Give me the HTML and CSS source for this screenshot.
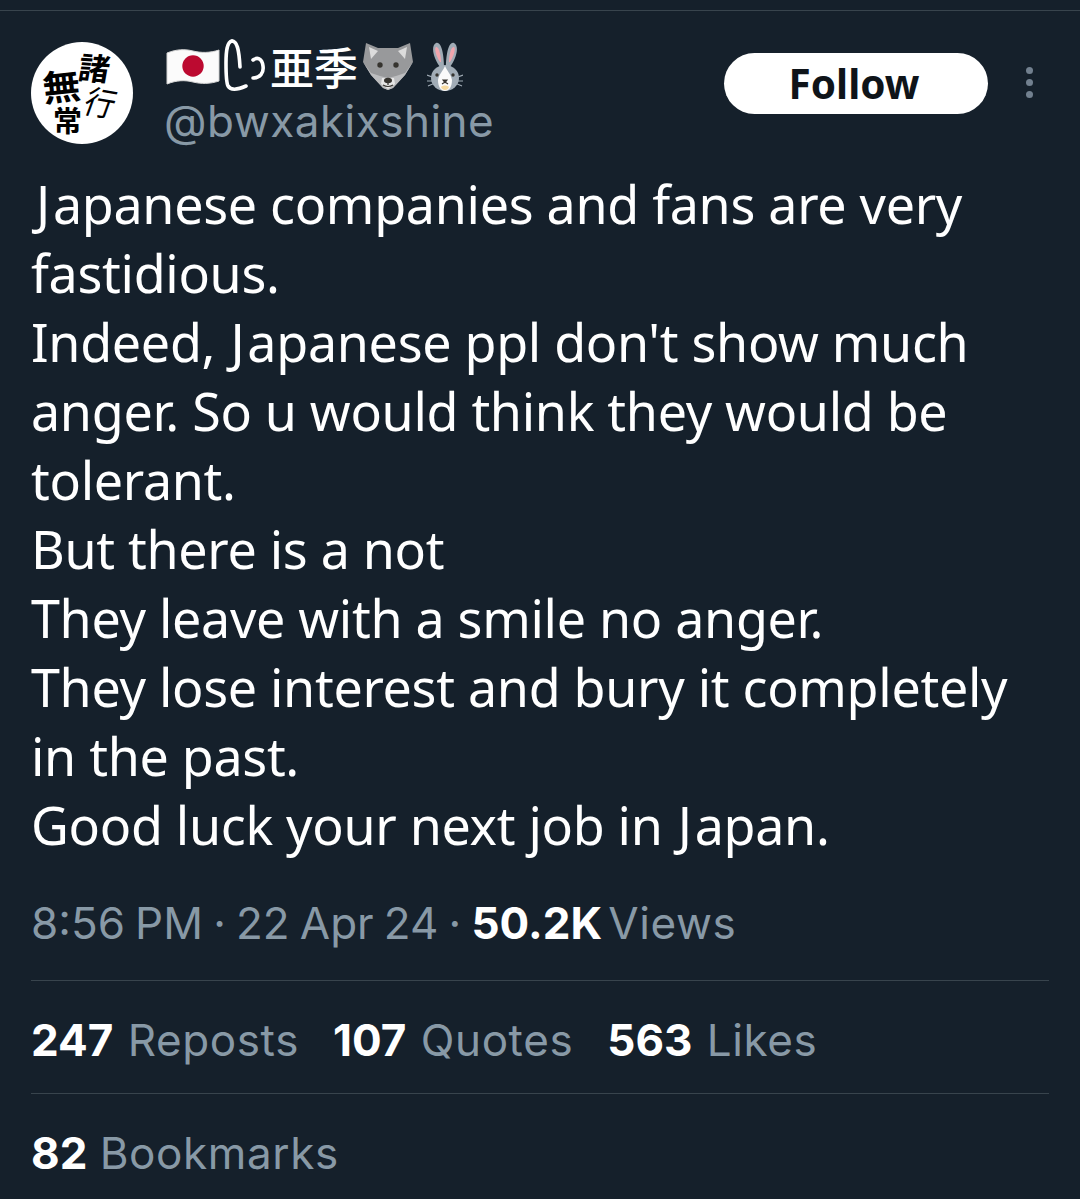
FILE: index.html
```html
<!DOCTYPE html>
<html lang="en">
<head>
<meta charset="utf-8">
<title>Post</title>
<link rel="stylesheet" href="styles.css">
</head>
<body>
<main class="post">
  <header class="head">
    <div class="avatar">
      <span class="cal c1">諸</span><span class="cal c2">行</span><span class="cal c3">無</span><span class="cal c4">常</span>
    </div>
    <div class="who">
      <div class="name">
        <svg class="flag" viewBox="0 0 56 44"><path d="M2 9C12 5 20 5 28 7s17 2 26-1v31c-9 3-18 3-26 1S12 36 2 40z" fill="#fbfbfb" stroke="#d5d5d5" stroke-width="1"/><circle cx="28" cy="22" r="10.7" fill="#bc0a30"/></svg>
        <svg class="kana" viewBox="0 0 42 54" fill="none" stroke="#fff" stroke-width="3.6" stroke-linecap="round"><path d="M8 2C3 3 2 12 2 24c0 10 0 19 2 23 3 5 9 4 18 0"/><path d="M8 2c5 0 7 8 8 26"/><path d="M29 21c4-3 9-2 10 6 1 7-3 12-10 12"/></svg>
        <span class="jp">亜季</span>
        <svg class="wolf" viewBox="0 0 50 48"><path d="M3 1l12 5h20l12-5 3 19-8 13-12 13-5 2-5-2L8 33 0 20z" fill="#98999b"/><path d="M6 5l9 4-7 8zM44 5l-9 4 7 8z" fill="#dcdcdc"/><path d="M0 20l8 11 9 3 8 2 8-2 9-3 8-11-8 13-12 13-5 2-5-2L8 33z" fill="#bcbdbf"/><path d="M19 36h12l1 6-7 5-7-5z" fill="#e6e6e6"/><ellipse cx="25" cy="38.500" rx="4" ry="2.800" fill="#36342f"/><path d="M25 41v2M20 43q5 3 10 0" stroke="#36342f" stroke-width="1.200" fill="none"/><circle cx="17" cy="23" r="2.700" fill="#36342f"/><circle cx="33" cy="23" r="2.700" fill="#36342f"/></svg>
        <svg class="rabbit" viewBox="0 0 36 49"><path d="M14 26C7 18 3 4 9 1c6-2 8 14 8 24zM22 26c7-8 11-22 5-25-6-2-8 14-8 24z" fill="#a0abb5"/><path d="M13 20C9 14 7 6 9 5c3-1 5 9 5 15zM23 20c4-6 6-14 4-15-3-1-5 9-5 15z" fill="#f2a5ad"/><ellipse cx="18" cy="36" rx="14" ry="13" fill="#a2adb7"/><path d="M18 24c2 5 6 8 7 14 0 7-3 11-7 11s-7-4-7-11c1-6 5-9 7-14z" fill="#fafafa"/><path d="M14 45c2-2 6-2 8 0-1 4-7 4-8 0z" fill="#f5d9a0"/><circle cx="10" cy="33" r="1.700" fill="#36342f"/><circle cx="26" cy="33" r="1.700" fill="#36342f"/><path d="M16 38h4l-2 2.500zM18 40l-3 2M18 40l3 2" stroke="#36342f" stroke-width="1.100" fill="#36342f"/><path d="M0 33l8 3M0 39h7M1 44l7-3M36 33l-8 3M36 39h-7M35 44l-7-3" stroke="#a0abb5" stroke-width="1.200"/></svg>
      </div>
      <div class="handle">@bwxakixshine</div>
    </div>
    <button class="follow">Follow</button>
    <div class="more"><i></i><i></i><i></i></div>
  </header>
  <p class="text"><span class="j first">J</span>apanese companies and fans are very<br>fastidious.<br>Indeed, <span class="j">J</span>apanese ppl don't show much<br>anger. So u would think they would be<br>tolerant.<br>But there is a not<br>They leave with a smile no anger.<br>They lose interest and bury it completely<br>in the past.<br>Good luck your next job in <span class="j">J</span>apan.</p>
  <div class="meta">8:56 PM · 22 Apr 24 · <b>50.2K</b> <span class="label">Views</span></div>
  <div class="stats"><span><b>247</b> <span class="label">Reposts</span></span><span><b>107</b> <span class="label">Quotes</span></span><span><b>563</b> <span class="label">Likes</span></span></div>
  <div class="stats"><span><b>82</b> <span class="label">Bookmarks</span></span></div>
</main>
</body>
</html>
```
FILE: styles.css
```css
* { box-sizing: border-box; }
html, body { margin: 0; height: 100%; }
body { background: #15202b; color: #fff; font-family: "Noto Sans", "Noto Sans CJK JP", sans-serif; overflow: hidden; }
.post { margin-top: 10px; border-top: 1px solid #38444d; padding: 0 31px; height: 1189px; }
.head { display: flex; align-items: flex-start; padding: 31px 7px 0 0; height: 136px; }
.avatar { position: relative; width: 102px; height: 102px; border-radius: 50%; background: #fff; overflow: hidden; flex: none; }
.cal { position: absolute; color: #000; font-family: "Noto Sans CJK JP", sans-serif; font-weight: 700; line-height: 1; }
.c1 { left: 48px; top: 9px; font-size: 31px; transform: rotate(4deg) skewX(-6deg); }
.c2 { left: 55px; top: 44px; font-size: 30px; font-weight: 400; transform: rotate(10deg) skewX(-10deg) scaleY(1.1); }
.c3 { left: 12px; top: 24px; font-size: 36px; transform: rotate(-6deg) scaleX(1.05); }
.c4 { left: 22px; top: 63px; font-size: 29px; }
.who { margin-left: 31px; flex: 1; }
.name { display: flex; align-items: center; height: 54px; margin-top: -3px; }
.flag { width: 56px; height: 44px; margin-left: 1px; }
.kana { width: 42px; height: 54px; margin-left: 3px; }
.jp { font-size: 44px; font-weight: 500; line-height: 1; font-family: "Noto Sans CJK JP", sans-serif; margin-left: 4px; }
.wolf { width: 50px; height: 48px; margin-left: 5px; }
.rabbit { width: 36px; height: 49px; margin-left: 14px; }
.handle { font-size: 44px; letter-spacing: .5px; line-height: 52px; color: #8899a6; font-family: "Inter", sans-serif; margin-top: 2px; }
.follow { width: 264px; height: 61px; margin-top: 11px; border: 0; border-radius: 31px; background: #fff; color: #0f1419; font: 700 40.500px "Noto Sans", sans-serif; padding: 0 4px 0 0; }
.more { width: 26px; margin-left: 28px; margin-top: 25px; display: flex; flex-direction: column; gap: 5px; align-items: center; }
.more i { width: 7px; height: 7px; border-radius: 50%; background: #72808f; }
.text { margin: 0; font-size: 52px; letter-spacing: -.3px; line-height: 69px; padding-top: 22px; }
.j { margin: 0 3px 0 2px; }
.j.first { margin-left: 5px; }
.meta { margin-top: 34px; font-size: 44px; word-spacing: -2.200px; line-height: 60px; color: #8899a6; font-family: "Inter", sans-serif; padding-bottom: 27px; border-bottom: 1px solid #38444d; }
.meta b { margin-right: -4px; }
.meta b, .stats b { color: #fff; font-weight: 700; }
.label { letter-spacing: .6px; }
.stats { display: flex; gap: 34px; font-family: "Inter", sans-serif; font-size: 44px; line-height: 60px; color: #8899a6; height: 113px; padding-top: 29px; border-bottom: 1px solid #38444d; }
.stats b { margin-right: 2px; }
.stats:last-child { border-bottom: 0; }
.stats:last-child b { margin-right: 0; }
```
